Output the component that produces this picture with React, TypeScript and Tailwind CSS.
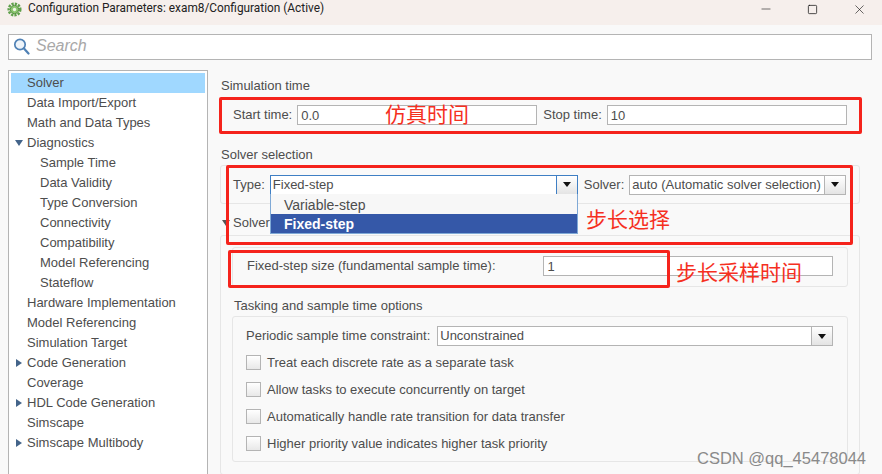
import { Minus, Square, X } from "lucide-react";

const treeItems = [
  { label: "Solver", level: 0, active: true },
  { label: "Data Import/Export", level: 0 },
  { label: "Math and Data Types", level: 0 },
  { label: "Diagnostics", level: 0, arrow: "down" },
  { label: "Sample Time", level: 1 },
  { label: "Data Validity", level: 1 },
  { label: "Type Conversion", level: 1 },
  { label: "Connectivity", level: 1 },
  { label: "Compatibility", level: 1 },
  { label: "Model Referencing", level: 1 },
  { label: "Stateflow", level: 1 },
  { label: "Hardware Implementation", level: 0 },
  { label: "Model Referencing", level: 0 },
  { label: "Simulation Target", level: 0 },
  { label: "Code Generation", level: 0, arrow: "right" },
  { label: "Coverage", level: 0 },
  { label: "HDL Code Generation", level: 0, arrow: "right" },
  { label: "Simscape", level: 0 },
  { label: "Simscape Multibody", level: 0, arrow: "right" },
];

const checks = [
  "Treat each discrete rate as a separate task",
  "Allow tasks to execute concurrently on target",
  "Automatically handle rate transition for data transfer",
  "Higher priority value indicates higher task priority",
];

function Caret() {
  return (
    <svg width="8" height="5" viewBox="0 0 8 5">
      <path d="M0 0h8L4 5z" fill="#111" />
    </svg>
  );
}

function Combo({ value, className, focused }: { value: string; className: string; focused?: boolean }) {
  return (
    <div className={`flex h-[20px] items-stretch border bg-white ${focused ? "border-[#3f7fc4]" : "border-[#b4b4b4]"} ${className}`}>
      <div className="flex-1 truncate pl-[2px] leading-[18px]">{value}</div>
      <div className={`flex w-[21px] items-center justify-center border-l bg-gradient-to-b from-[#ffffff] to-[#e4e4e4] ${focused ? "border-[#3f7fc4]" : "border-[#b4b4b4]"}`}>
        <Caret />
      </div>
    </div>
  );
}

function Field({ value, className }: { value: string; className: string }) {
  return (
    <div className={`h-[20px] border border-[#b4b4b4] bg-white pl-[3px] leading-[19px] ${className}`}>{value}</div>
  );
}

function Note({ text, className }: { text: string; className: string }) {
  return (
    <div className={`absolute text-[21px] leading-[26px] text-[#f5301f] [font-family:'Noto_Sans_CJK_SC','Noto_Sans',sans-serif] ${className}`}>
      {text}
    </div>
  );
}

export default function App() {
  return (
    <div className="relative h-[474px] w-[882px] overflow-hidden bg-[#f9f9f9] text-[13px] text-[#4d4d4d] [font-family:'Liberation_Sans',Arial,sans-serif]">
      {/* title bar */}
      <div className="flex h-[25px] items-center bg-[#f6efec] pb-[7px] pl-[7px] text-[#222]">
        <svg width="15" height="15" viewBox="0 0 16 16">
          <circle cx="8" cy="8" r="6.2" fill="none" stroke="#5fa04a" strokeWidth="2.6" strokeDasharray="2.4 1.2" />
          <circle cx="8" cy="8" r="4.4" fill="#8cc56f" stroke="#4b8a3a" strokeWidth="1" />
          <circle cx="8" cy="8" r="1.8" fill="#eef6e6" />
        </svg>
        <div className="ml-[6px] flex-1 text-[11.85px] [font-family:Roboto,sans-serif]">
          Configuration Parameters: exam8/Configuration (Active)
        </div>
        <Minus size={14} strokeWidth={1} className="mr-[34px] text-[#111]" />
        <Square size={11} strokeWidth={1.6} className="mr-[34px] text-[#111]" />
        <X size={15} strokeWidth={1} className="mr-[15px] text-[#111]" />
      </div>

      <div className="px-[8px] pt-[9px]">
        {/* search */}
        <div className="flex h-[26px] w-[864px] items-center border border-[#b4b4b4] bg-white pb-[2px] pl-[4px]">
          <svg width="17" height="18" viewBox="0 0 17 18">
            <circle cx="7" cy="7.5" r="5.2" fill="#eef4fa" stroke="#4f81b5" strokeWidth="1.7" />
            <path d="M11 11.5l4.5 5" stroke="#4f81b5" strokeWidth="2.2" strokeLinecap="round" />
          </svg>
          <span className="ml-[6px] text-[16px] italic text-[#a8a8a8]">Search</span>
        </div>

        <div className="mt-[10px] flex">
          {/* tree */}
          <div className="h-[410px] w-[200px] shrink-0 border border-[#b4b4b4] bg-white px-[2px] pt-[2px]">
            {treeItems.map((item, i) => (
              <div
                key={i}
                className={`relative h-[20px] leading-[20px] ${item.active ? "bg-[#a0d8ff]" : ""} ${item.level === 1 ? "pl-[29px]" : "pl-[16px]"}`}
              >
                {item.arrow === "down" && (
                  <svg className="absolute left-[4px] top-[7px]" width="8" height="6" viewBox="0 0 8 6">
                    <path d="M0 0h8L4 6z" fill="#43648a" />
                  </svg>
                )}
                {item.arrow === "right" && (
                  <svg className="absolute left-[5px] top-[6px]" width="6" height="8" viewBox="0 0 6 8">
                    <path d="M0 0l6 4-6 4z" fill="#43648a" />
                  </svg>
                )}
                {item.label}
              </div>
            ))}
          </div>

          {/* settings */}
          <div className="ml-[12px] w-[640px] shrink-0 pt-[8px]">
            <div className="h-[16px] pl-[1px] leading-[16px]">Simulation time</div>
            <div className="mt-[3px] flex h-[36px] items-center rounded-[3px] border border-[#e6e6e6] pl-[12px]">
              <span>Start time:</span>
              <Field value="0.0" className="ml-[5px] w-[240px]" />
              <span className="ml-[6px]">Stop time:</span>
              <Field value="10" className="ml-[5px] w-[240px]" />
            </div>

            <div className="mt-[14px] h-[16px] pl-[1px] leading-[16px]">Solver selection</div>
            <div className="mt-[2px] flex h-[39px] items-center rounded-[3px] border border-[#e6e6e6] pl-[12px]">
              <span>Type:</span>
              <Combo value="Fixed-step" focused className="ml-[5px] w-[308px]" />
              <span className="ml-[6px]">Solver:</span>
              <Combo value="auto (Automatic solver selection)" className="ml-[5px] w-[217px]" />
            </div>

            <div className="relative mt-[11px] h-[16px] pl-[13px] leading-[16px]">
              <svg className="absolute left-[2px] top-[5px]" width="8" height="6" viewBox="0 0 8 6">
                <path d="M0 0h8L4 6z" fill="#555" />
              </svg>
              Solver details
            </div>
            <div className="mt-[4px] h-[240px] rounded-[3px] border border-[#e6e6e6] px-[11px] pt-[11px]">
              <div className="flex h-[40px] items-center rounded-[3px] border border-[#e6e6e6] pb-[2px] pl-[14px] pr-[14px]">
                <span className="w-[297px]">Fixed-step size (fundamental sample time):</span>
                <Field value="1" className="w-[290px]" />
              </div>
              <div className="mt-[11px] h-[16px] pl-[2px] leading-[16px]">Tasking and sample time options</div>
              <div className="mt-[2px] h-[146px] rounded-[3px] border border-[#e6e6e6] px-[13px] pt-[9px]">
                <div className="flex items-center">
                  <span>Periodic sample time constraint:</span>
                  <Combo value="Unconstrained" className="ml-[7px] w-[396px]" />
                </div>
                <div className="mt-[9px] flex flex-col gap-[12px]">
                  {checks.map((c) => (
                    <div key={c} className="flex h-[15px] items-center">
                      <div className="h-[15px] w-[15px] border border-[#b4b4b4] bg-gradient-to-b from-[#ffffff] to-[#e8e8e8]" />
                      <span className="ml-[6px]">{c}</span>
                    </div>
                  ))}
                </div>
              </div>
            </div>
          </div>
        </div>
      </div>

      {/* open dropdown */}
      <div className="absolute left-[270px] top-[194px] w-[308px] border border-t-0 border-[#7fa9d6] bg-[#f7f7f7] text-[14px]">
        <div className="h-[20px] pl-[13px] pt-[1px] leading-[20px]">Variable-step</div>
        <div className="h-[19px] bg-[#3558a8] pl-[13px] font-bold leading-[20px] text-white">Fixed-step</div>
      </div>

      {/* red annotations */}
      <div className="absolute left-[219px] top-[97px] h-[37px] w-[643px] rounded-[2px] border-[3px] border-[#f5231c]" />
      <div className="absolute left-[226px] top-[165px] h-[80px] w-[627px] rounded-[2px] border-[3px] border-[#f5231c]" />
      <div className="absolute left-[228px] top-[250px] h-[38px] w-[442px] rounded-[2px] border-[3px] border-[#f5231c]" />
      <Note text="仿真时间" className="left-[385px] top-[100px]" />
      <Note text="步长选择" className="left-[586px] top-[205px]" />
      <Note text="步长采样时间" className="left-[676px] top-[258px]" />

      <div className="absolute left-[697px] top-[446px] text-[16.5px] text-[#8a8a8a]">CSDN @qq_45478044</div>
    </div>
  );
}
